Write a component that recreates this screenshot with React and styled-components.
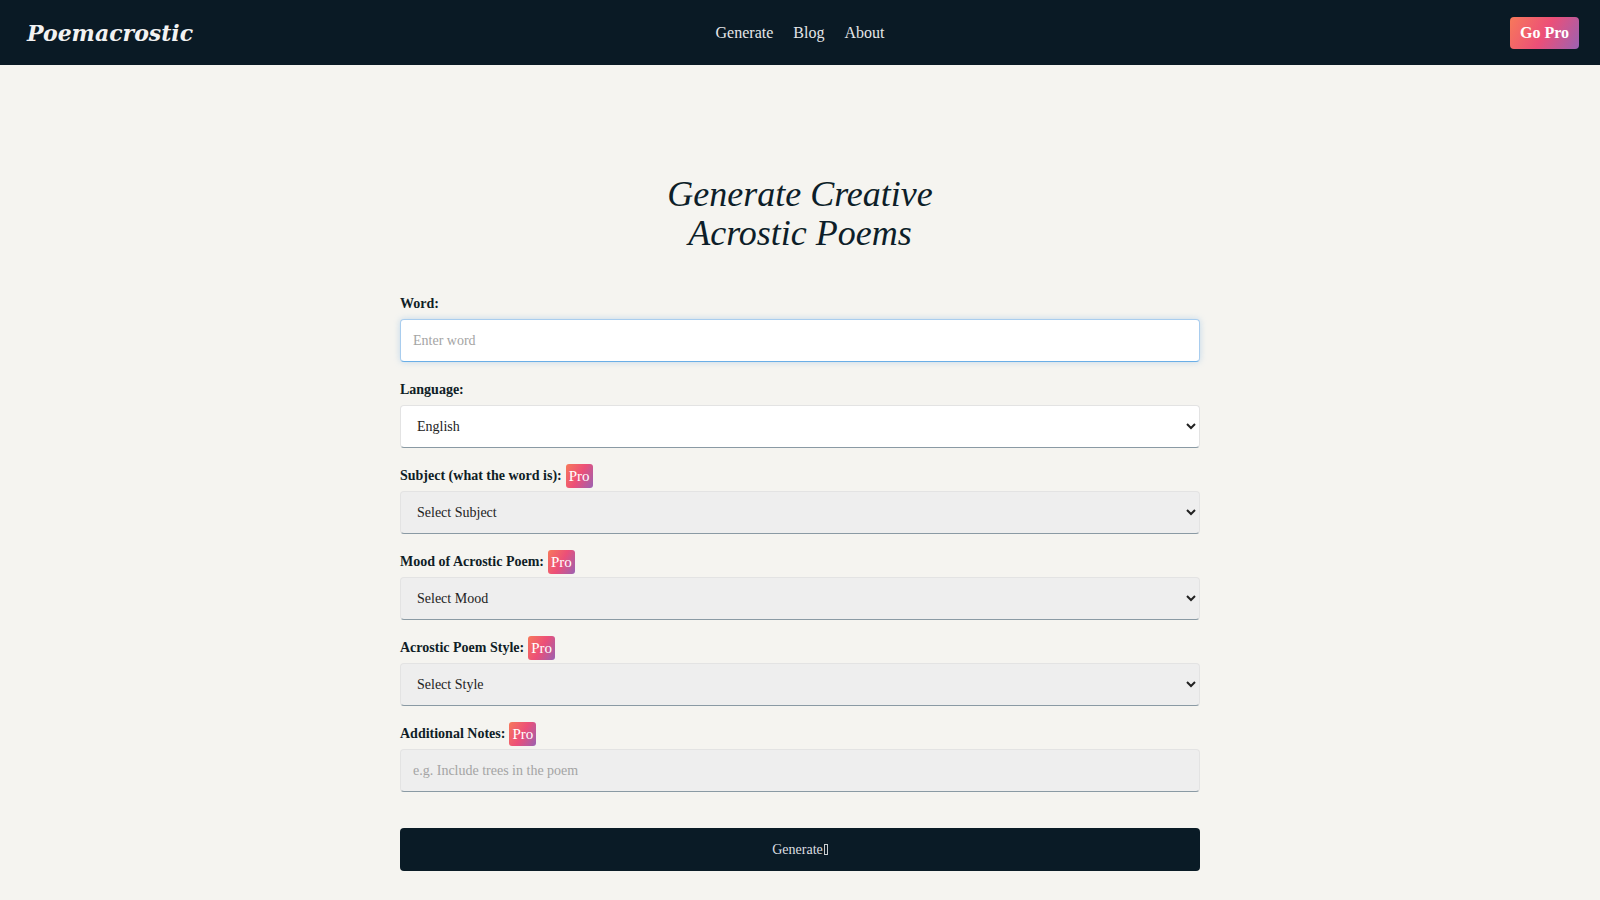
import React from 'react'
import styled, {createGlobalStyle} from 'styled-components'

const GlobalStyle = createGlobalStyle`
  html, body {
    margin: 0;
    padding: 0;
    background: #f5f4f0;
    font-family: 'Liberation Serif', 'Times New Roman', serif;
    color: #0d1e29;
  }
  * {
    box-sizing: border-box;
  }
`

const proGradient = 'linear-gradient(120deg, #f7795a 0%, #ec4f78 50%, #9a62b3 100%)'

const Header = styled.header`
  height: 65px;
  background: #0a1a25;
  display: grid;
  grid-template-columns: 1fr auto 1fr;
  align-items: center;
  padding: 0 21px;
`

const Logo = styled.a`
  font-family: 'DejaVu Serif', serif;
  font-weight: bold;
  font-style: italic;
  font-size: 22px;
  color: #f2f2f2;
  text-decoration: none;
  justify-self: start;
  margin-left: 6px;
`

const Nav = styled.nav`
  display: flex;
  gap: 20px;
`

const NavLink = styled.a`
  color: #e4e6e8;
  font-size: 16px;
  text-decoration: none;
`

const GoPro = styled.button`
  justify-self: end;
  border: none;
  border-radius: 4px;
  background: ${proGradient};
  color: #fff;
  font-family: 'Liberation Serif', serif;
  font-weight: bold;
  font-size: 16px;
  height: 32px;
  padding: 0 10px;
  cursor: pointer;
`

const Main = styled.main`
  width: 800px;
  margin: 0 auto;
  padding: 110px 0 40px;
`

const Title = styled.h1`
  margin: 0 0 39px;
  text-align: center;
  font-weight: normal;
  font-style: italic;
  font-size: 36px;
  line-height: 39px;
  color: #0d1e29;
`

const Form = styled.form`
  display: flex;
  flex-direction: column;
`

const Field = styled.div`
  display: flex;
  flex-direction: column;
  gap: 3px;
  margin-bottom: 16px;
`

const Label = styled.label`
  display: flex;
  align-items: center;
  gap: 4px;
  min-height: 24px;
  font-size: 14px;
  font-weight: bold;
  color: #0f1d26;
`

const ProBadge = styled.span`
  display: inline-flex;
  align-items: center;
  height: 24px;
  padding: 0 3px;
  border-radius: 3px;
  background: ${proGradient};
  color: #fff;
  font-weight: normal;
  font-size: 15px;
`

const TextInput = styled.input`
  height: 43px;
  width: 100%;
  padding: 0 12px;
  border-radius: 4px;
  font-family: 'Liberation Serif', serif;
  font-size: 14px;
  color: #222;
  outline: none;
  background: ${props => props.locked ? '#eeeeee' : '#fff'};
  border: 1px solid ${props => props.focused ? '#a9cdee' : '#e3e3e3'};
  border-bottom: 1px solid ${props => props.focused ? '#6aaee6' : '#8a9aa4'};
  box-shadow: ${props => props.focused ? '0 0 6px rgba(120, 175, 225, 0.4)' : 'none'};

  &::placeholder {
    color: #a4a4a4;
  }
`

const Select = styled.select`
  height: 43px;
  width: 100%;
  padding: 0 8px 0 12px;
  border-radius: 4px;
  font-family: 'Liberation Serif', serif;
  font-size: 14px;
  color: #222;
  outline: none;
  background: ${props => props.locked ? '#eeeeee' : '#fff'};
  border: 1px solid #e3e3e3;
  border-bottom: 1px solid #8a9aa4;
`

const SubmitButton = styled.button`
  margin-top: 20px;
  height: 43px;
  width: 100%;
  border: none;
  border-radius: 4px;
  background: #0a1b26;
  color: #dcdfe1;
  font-family: 'Liberation Serif', serif;
  font-size: 14px;
  cursor: pointer;
`

// the missing-glyph box after the button label
const MissingGlyph = styled.span`
  display: inline-block;
  width: 4px;
  height: 11px;
  margin-left: 1px;
  border: 1px solid #c9cdd0;
  vertical-align: -1px;
`

const lockedFields = [
  {id: 'subject', label: 'Subject (what the word is):', placeholder: 'Select Subject'},
  {id: 'mood', label: 'Mood of Acrostic Poem:', placeholder: 'Select Mood'},
  {id: 'style', label: 'Acrostic Poem Style:', placeholder: 'Select Style'},
]

export default function App() {
  return (
    <>
      <GlobalStyle />
      <Header>
        <Logo href="#">Poemacrostic</Logo>
        <Nav>
          <NavLink href="#">Generate</NavLink>
          <NavLink href="#">Blog</NavLink>
          <NavLink href="#">About</NavLink>
        </Nav>
        <GoPro>Go Pro</GoPro>
      </Header>
      <Main>
        <Title>Generate Creative<br />Acrostic Poems</Title>
        <Form onSubmit={e => e.preventDefault()}>
          <Field>
            <Label htmlFor="word">Word:</Label>
            <TextInput id="word" placeholder="Enter word" focused autoFocus />
          </Field>
          <Field>
            <Label htmlFor="language">Language:</Label>
            <Select id="language" defaultValue="English">
              <option>English</option>
              <option>Spanish</option>
              <option>French</option>
            </Select>
          </Field>
          {lockedFields.map(field => (
            <Field key={field.id}>
              <Label htmlFor={field.id}>
                {field.label} <ProBadge>Pro</ProBadge>
              </Label>
              <Select id={field.id} locked defaultValue="">
                <option value="">{field.placeholder}</option>
              </Select>
            </Field>
          ))}
          <Field>
            <Label htmlFor="notes">
              Additional Notes: <ProBadge>Pro</ProBadge>
            </Label>
            <TextInput id="notes" locked placeholder="e.g. Include trees in the poem" />
          </Field>
          <SubmitButton type="submit">Generate<MissingGlyph /></SubmitButton>
        </Form>
      </Main>
    </>
  )
}
